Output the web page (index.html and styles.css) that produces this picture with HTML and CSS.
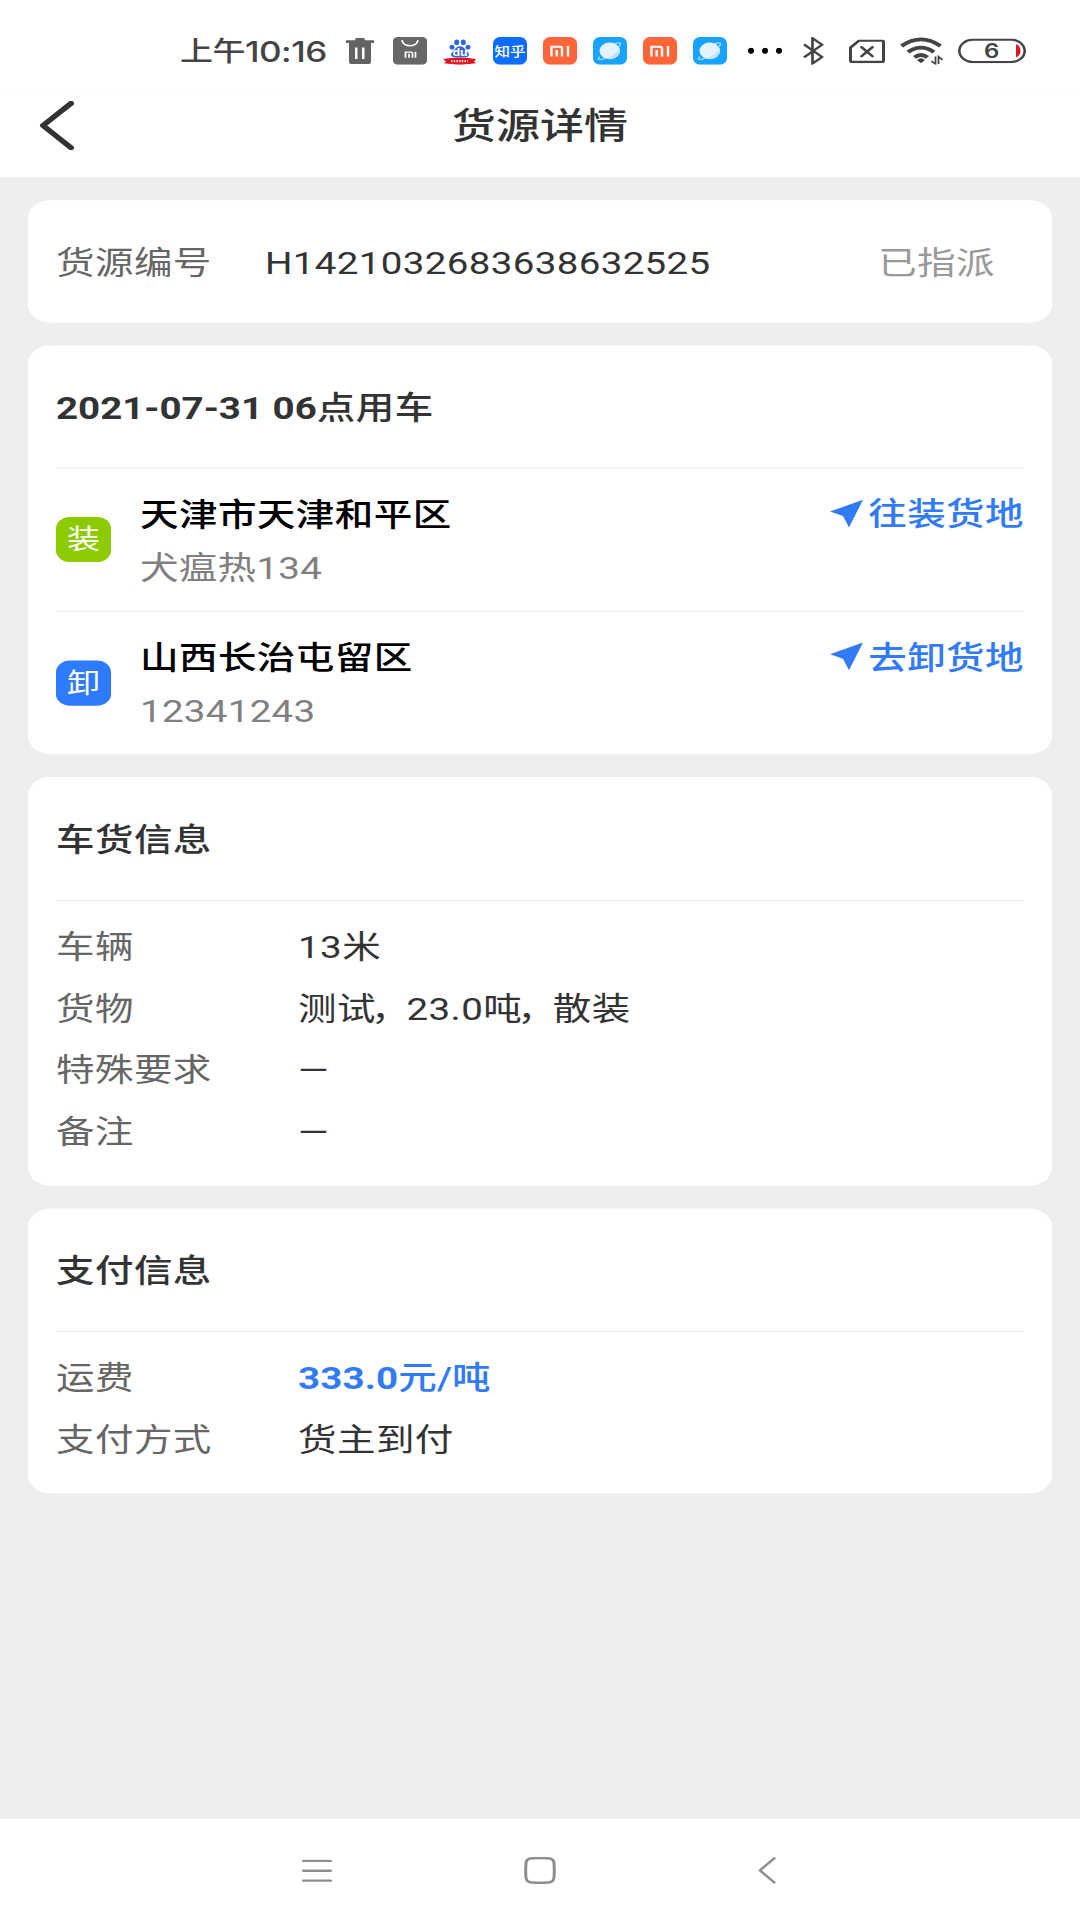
FILE: index.html
```html
<!DOCTYPE html>
<html lang="zh-CN">
<head>
<meta charset="UTF-8" />
<meta name="viewport" content="width=device-width, initial-scale=1" />
<title>货源详情</title>
<link rel="stylesheet" href="styles.css">
</head>
<body>

<div class="viewport">
<div class="screen">

  <div class="status-bar">
    <span class="time"><span class="ampm">上午</span>10:16</span>
    <svg class="trash" width="28" height="32" viewBox="0 0 28 32">
      <path d="M0 3h9l1-3h8l1 3h9v3.500H0z" fill="#636363"/>
      <path fill-rule="evenodd" d="M3 6h22v24q0 2-2 2H5q-2 0-2-2zM9 12v14h2.500V12zM16 12v14h2.500V12z" fill="#636363"/>
    </svg>
    <svg class="app" width="34" height="34" viewBox="0 0 34 34">
      <rect width="34" height="34" rx="5" fill="#676767"/>
      <path d="M9 4c1 9 15 9 16 0" fill="none" stroke="#fff" stroke-width="1.8"/>
      <path d="M12.500 25.500v-7h5.500q1.500 0 1.500 1.500v5.500M16 20.500v5M22.500 18v7.500" fill="none" stroke="#fff" stroke-width="1.700"/>
    </svg>
    <svg class="app" width="34" height="34" viewBox="0 0 34 34">
      <g fill="#2f66dd">
        <ellipse cx="9" cy="12.500" rx="2.500" ry="3"/>
        <ellipse cx="13.700" cy="6.500" rx="2.500" ry="3.500"/>
        <ellipse cx="20.300" cy="6.500" rx="2.500" ry="3.500"/>
        <ellipse cx="25" cy="12.500" rx="2.500" ry="3"/>
        <path d="M17 11.500c4 0 5 4 7.500 6.500 3 3.500 1 7-3 7H12.500c-4 0-6-3.500-3-7C12 15.500 13 11.500 17 11.500z"/>
      </g>
      <text x="17" y="23.500" text-anchor="middle" class="du">du</text>
      <path d="M0 27q17-3 33 0l-2 3 2 2q-6 1-8 1-8 2-17 0l-7-1 2-2z" fill="#e0131f"/>
      <path d="M8 29.500h17" stroke="#fbd9c8" stroke-width="3" stroke-dasharray="1.500 1.200"/>
    </svg>
    <svg class="app" width="34" height="34" viewBox="0 0 34 34">
      <rect width="34" height="34" rx="8" fill="#0b6cff"/>
      <text x="17" y="23" text-anchor="middle" class="zhihu">知乎</text>
    </svg>
    <svg class="app" width="34" height="34" viewBox="0 0 34 34">
      <rect width="34" height="34" rx="8" fill="#ff6539"/>
      <path d="M8.500 24V12h8.500q2 0 2 2v10M13.700 16v8M25 11v13" fill="none" stroke="#fff" stroke-width="2.400"/>
    </svg>
    <svg class="app" width="34" height="34" viewBox="0 0 34 34">
      <rect width="34" height="34" rx="8" fill="#17a3fe"/>
      <path d="M7 24c-4 4 0 5 6 1M21 9c6-3 8-2 5 3" fill="none" stroke="#a4dcff" stroke-width="1.400"/>
      <ellipse cx="16.800" cy="17" rx="10.300" ry="10.200" fill="#e4f3ff"/>
      <path d="M14 26q9-4 12.500-12 1 8-4 11-4 2.500-8.500 1z" fill="#c4e2fc"/>
    </svg>
    <svg class="app" width="34" height="34" viewBox="0 0 34 34">
      <rect width="34" height="34" rx="8" fill="#ff6539"/>
      <path d="M8.500 24V12h8.500q2 0 2 2v10M13.700 16v8M25 11v13" fill="none" stroke="#fff" stroke-width="2.400"/>
    </svg>
    <svg class="app" width="34" height="34" viewBox="0 0 34 34">
      <rect width="34" height="34" rx="8" fill="#17a3fe"/>
      <path d="M7 24c-4 4 0 5 6 1M21 9c6-3 8-2 5 3" fill="none" stroke="#a4dcff" stroke-width="1.400"/>
      <ellipse cx="16.800" cy="17" rx="10.300" ry="10.200" fill="#e4f3ff"/>
      <path d="M14 26q9-4 12.500-12 1 8-4 11-4 2.500-8.500 1z" fill="#c4e2fc"/>
    </svg>
    <svg class="dots" width="34" height="8" viewBox="0 0 34 8">
      <ellipse cx="3" cy="4" rx="3" ry="3.700"/><ellipse cx="17" cy="4" rx="3" ry="3.700"/><ellipse cx="31" cy="4" rx="3" ry="3.700"/>
    </svg>
    <svg class="bluetooth" width="21" height="34" viewBox="0 0 21 34">
      <path d="M1 9l18 15.500-9.500 8V1.500l9.500 8L1 25" fill="none" stroke="#444" stroke-width="2.700"/>
    </svg>
    <svg class="sim" width="36" height="29" viewBox="0 0 36 29">
      <path d="M10 1.500h23q1.500 0 1.500 1.500v23q0 1.500-1.500 1.500H3q-1.500 0-1.500-1.500V10z" fill="none" stroke="#444" stroke-width="3"/>
      <path d="M12.500 9.500l11 11M23.500 9.500l-11 11" stroke="#444" stroke-width="2.800" stroke-linecap="round"/>
    </svg>
    <svg class="wifi" width="43" height="34" viewBox="0 0 43 34">
      <g fill="none" stroke="#444" stroke-width="4.600">
        <path d="M1.500 11q19.500-16 39 0"/>
        <path d="M8 18.500q13-11 26 0"/>
        <path d="M14.500 25q6.500-6 13 0"/>
      </g>
      <path d="M17 28q4-4 8 0l-4 4z" fill="#444"/>
      <path d="M35.500 24v9l-4-3.500M38.500 33v-9l4 4" fill="none" stroke="#444" stroke-width="1.800"/>
    </svg>
    <svg class="battery" width="68" height="30" viewBox="0 0 68 30">
      <rect x="1.300" y="1.300" width="65.400" height="27.400" rx="13.700" fill="none" stroke="#444" stroke-width="2.600"/>
      <path d="M58 7q4.500 2 4.500 8T58 23z" fill="#e3141b"/>
      <text x="34" y="24" text-anchor="middle" class="level">6</text>
    </svg>
  </div>

  <div class="title-bar">
    <svg class="back" width="36" height="60" viewBox="0 0 36 60">
      <path d="M32 3L4 30l28 27" fill="none" stroke="#333" stroke-width="6" stroke-linecap="round" stroke-linejoin="round"/>
    </svg>
    <h1>货源详情</h1>
  </div>

  <div class="content">

    <div class="card number-card">
      <span class="label">货源编号</span>
      <span class="number">H1421032683638632525</span>
      <span class="state">已指派</span>
    </div>

    <div class="card">
      <h2><b>2021-07-31 06</b>点用车</h2>
      <div class="route">
        <span class="badge load">装</span>
        <div class="place">
          <div class="city">天津市天津和平区</div>
          <div class="address">犬瘟热134</div>
        </div>
        <a class="go">
          <svg width="33" height="34" viewBox="0 0 33 34"><path d="M33 0L0 14.500l13 5.500 6 14z" fill="#317bf9"/></svg>
          往装货地
        </a>
      </div>
      <div class="route">
        <span class="badge unload">卸</span>
        <div class="place">
          <div class="city">山西长治屯留区</div>
          <div class="address">12341243</div>
        </div>
        <a class="go">
          <svg width="33" height="34" viewBox="0 0 33 34"><path d="M33 0L0 14.500l13 5.500 6 14z" fill="#317bf9"/></svg>
          去卸货地
        </a>
      </div>
    </div>

    <div class="card">
      <h2>车货信息</h2>
      <dl>
        <dt>车辆</dt><dd>13米</dd>
        <dt>货物</dt><dd>测试<span class="comma">，</span>23.0吨<span class="comma">，</span>散装</dd>
        <dt>特殊要求</dt><dd><span class="none">—</span></dd>
        <dt>备注</dt><dd><span class="none">—</span></dd>
      </dl>
    </div>

    <div class="card">
      <h2>支付信息</h2>
      <dl>
        <dt>运费</dt><dd class="price"><b>333.0</b>元/吨</dd>
        <dt>支付方式</dt><dd>货主到付</dd>
      </dl>
    </div>

  </div>

  <div class="nav-bar">
    <svg width="30" height="28" viewBox="0 0 30 28">
      <path d="M1.300 2h27.400M1.300 14h27.400M1.300 26h27.400" stroke="#8f8f8f" stroke-width="2.800" stroke-linecap="round"/>
    </svg>
    <svg class="home" width="32" height="33" viewBox="0 0 32 33">
      <path d="M8 1.700q8-.6 16 0 5.600.4 6 6 .6 9 0 17.600-.4 5.600-6 6-8 .6-16 0-5.600-.4-6-6-.6-9 0-17.600.4-5.600 6-6z" fill="none" stroke="#8f8f8f" stroke-width="3"/>
    </svg>
    <svg width="18" height="33" viewBox="0 0 18 33">
      <path d="M16.300 1.700L2 16.500l14.300 14.800" fill="none" stroke="#8f8f8f" stroke-width="2.800" stroke-linecap="round" stroke-linejoin="round"/>
    </svg>
  </div>

</div>
</div>

</body>
</html>
```
FILE: styles.css
```css
html, body {
  margin: 0;
  background: #eee;
}

.viewport {
  width: 1080px;
  height: 1920px;
  overflow: hidden;
}

/* 1080x2340 的手机屏幕，纵向压缩到 1920 */
.screen {
  display: flex;
  flex-direction: column;
  width: 1080px;
  height: 2340px;
  transform: scaleY(0.820513);
  transform-origin: 0 0;
  background: #eee;
  font-family: Roboto, "Noto Sans CJK SC", sans-serif;
  font-size: 38.5px;
  letter-spacing: 0.45px;
  color: #333;
}

svg {
  display: block;
  flex: none;
}

/* 状态栏 */
.status-bar {
  display: flex;
  align-items: center;
  box-sizing: border-box;
  height: 108px;
  padding: 16px 0 0 180px;
  background: #fff;
}

.time {
  display: flex;
  align-items: center;
  width: 166px;
  font-family: Inter, "Noto Sans CJK SC", sans-serif;
  font-size: 35px;
  font-weight: 500;
  letter-spacing: -0.5px;
  line-height: 44px;
  white-space: nowrap;
  color: #444;
}

.ampm {
  font-size: 33px;
}

.trash {
  margin-right: 3px;
}

.app {
  margin-left: 16px;
}

.du {
  font: bold 12px Inter, sans-serif;
  letter-spacing: 0;
  fill: #fff;
}

.zhihu {
  font: 500 15.5px "Noto Sans CJK SC", sans-serif;
  letter-spacing: 0;
  fill: #fff;
}

.dots {
  margin-left: 21px;
}

.bluetooth {
  margin-left: 21px;
}

.sim {
  margin-left: 25px;
}

.wifi {
  margin-left: 15px;
}

.battery {
  margin-left: 15px;
}

.level {
  font: 600 24px Inter, sans-serif;
  fill: #444;
}

/* 标题栏 */
.title-bar {
  display: grid;
  grid-template-columns: 1fr auto 1fr;
  align-items: center;
  height: 108px;
  padding: 0 39px;
  background: #fff;
}

.title-bar h1 {
  margin: 0;
  padding-bottom: 22px;
  font-size: 44px;
  font-weight: 500;
  letter-spacing: 0.1px;
}

.back {
  margin-bottom: 19px;
}

/* 卡片 */
.content {
  flex: 1;
  display: flex;
  flex-direction: column;
  gap: 28px;
  padding: 27.5px 28px;
}

.card {
  padding: 0 28px;
  background: #fff;
  border-radius: 22px;
}

.card h2 {
  margin: 0;
  height: 149.5px;
  line-height: 153px;
  font-size: 38.5px;
  font-weight: 500;
  border-bottom: 1px solid #e4e4e4;
}

.number-card {
  display: flex;
  height: 149px;
  line-height: 153px;
}

.label {
  width: 209px;
  color: #666;
}

.number {
  letter-spacing: 0.35px;
}

.state {
  margin-left: auto;
  padding-right: 29px;
  color: #999;
}

.route {
  display: flex;
  align-items: center;
  height: 173.5px;
}

.route + .route {
  border-top: 1px solid #e4e4e4;
}

.badge {
  width: 55px;
  height: 55px;
  margin-right: 29px;
  border-radius: 14px;
  font-size: 33px;
  line-height: 56px;
  text-align: center;
  letter-spacing: 0;
  color: #fff;
}

.load {
  background: #8ccb00;
}

.unload {
  background: #2e7bfd;
}

.place {
  flex: 1;
  padding-top: 4px;
  line-height: 65px;
}

.city {
  font-weight: 500;
  color: #000;
}

.address {
  letter-spacing: 0.3px;
  color: #808080;
}

.go {
  display: flex;
  align-items: center;
  gap: 5px;
  align-self: flex-start;
  margin-top: 23px;
  line-height: 65px;
  font-weight: 500;
  color: #317bf9;
}

.go svg {
  margin-bottom: 2px;
}

/* 信息列表 */
dl {
  display: grid;
  grid-template-columns: 242px 1fr;
  grid-auto-rows: 75px;
  margin: 0;
  padding: 19px 0 28px;
  line-height: 75.5px;
}

dt {
  color: #666;
}

dd {
  margin: 0;
}

.comma {
  margin-left: -5px;
  letter-spacing: -3px;
}

.none {
  font-size: 39px;
}

.price {
  font-weight: 500;
  letter-spacing: 0.15px;
  color: #317bf9;
}

h2 b,
.price b {
  font-weight: 700;
}

h2 b {
  letter-spacing: 0;
}

/* 底部导航 */
.nav-bar {
  display: flex;
  align-items: center;
  justify-content: space-between;
  box-sizing: border-box;
  height: 125px;
  padding: 3px 304px 0 302px;
  border-top: 1px solid #ddd;
  background: #fff;
}

.home {
  margin-right: 10px;
}
```
